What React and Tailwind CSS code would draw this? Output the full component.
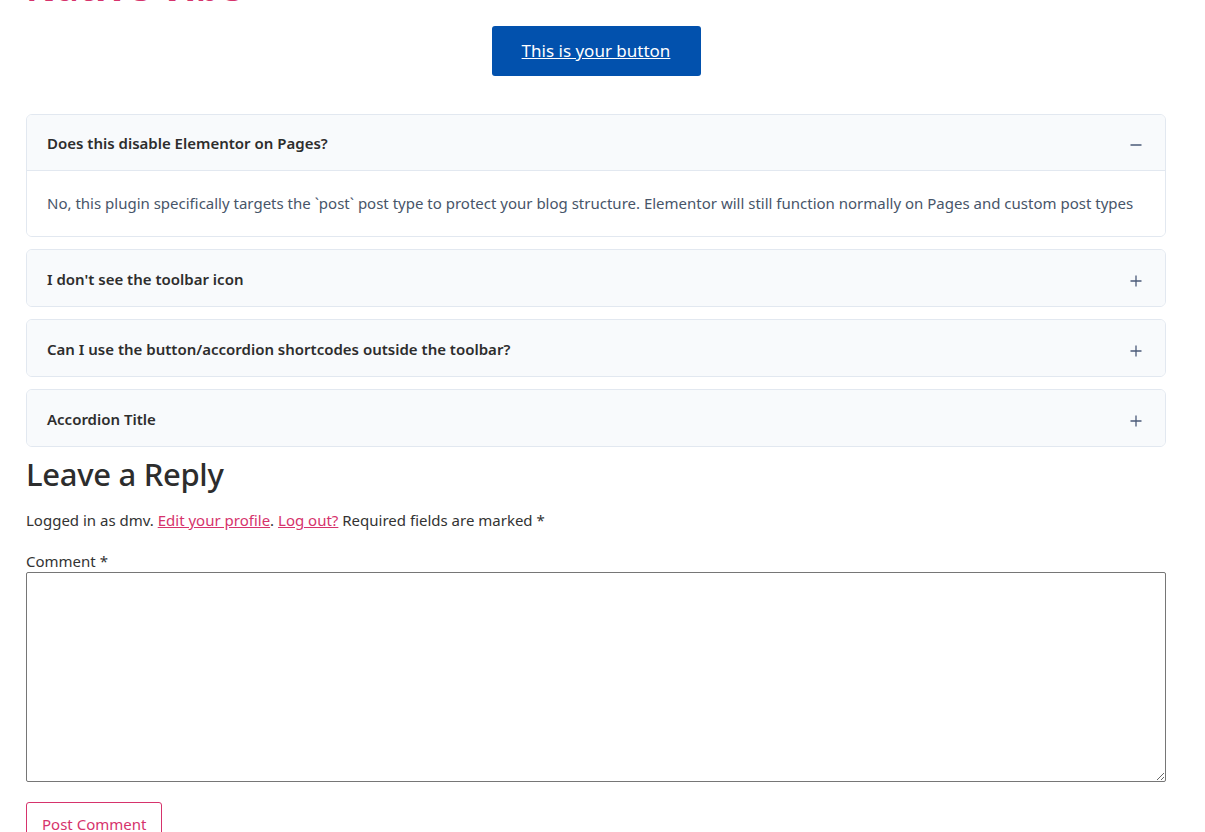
import React from "react";

const Plus = () => (
  <svg width="12" height="12" viewBox="0 0 12 12" className="shrink-0">
    <path d="M6 0.5V11.5M0.5 6H11.5" stroke="#4a5a78" strokeWidth="1.3" />
  </svg>
);
const Minus = () => (
  <svg width="12" height="12" viewBox="0 0 12 12" className="shrink-0">
    <path d="M0.5 6H11.5" stroke="#4a5a78" strokeWidth="1.3" />
  </svg>
);

const Item = ({ title, open, children }) => (
  <div className="border border-[#e2e8f0] rounded-[6px] overflow-hidden">
    <div className={`flex items-center justify-between bg-[#f8fafc] pl-[20px] pr-[23px] h-[56px] pt-[2px] ${open ? "border-b border-[#e2e8f0]" : ""}`}>
      <span className="text-[15px] font-semibold text-[#2d2d2d]">{title}</span>
      <span className="mt-[3px]">{open ? <Minus /> : <Plus />}</span>
    </div>
    {open && (
      <div className="pl-[20px] pr-[16px] pt-[20px] pb-[21px] text-[15px] text-[#475569] leading-[24px] bg-white whitespace-nowrap">
        {children}
      </div>
    )}
  </div>
);

export default function App() {
  return (
    <div className="bg-white w-[1205px] h-[832px] overflow-hidden text-[#333]" style={{ fontFamily: '"Noto Sans", "Open Sans", sans-serif' }}>
      <div className="px-[26px] w-[1192px]">
        <h1 className="text-[37px] font-bold text-[#d6336c] leading-none -mt-[32px] h-[40px] tracking-[0.3px]">Native Vibe</h1>
        <div className="flex justify-center mt-[18px]">
          <a href="#" className="bg-[#0251ad] text-white text-[17px] underline rounded-[3px] w-[209px] h-[50px] flex items-center justify-center">This is your button</a>
        </div>
        <div className="mt-[38px] flex flex-col gap-[12px]">
          <Item title="Does this disable Elementor on Pages?" open>
            No, this plugin specifically targets the `post` post type to protect your blog structure. Elementor will still function normally on Pages and custom post types
          </Item>
          <Item title="I don't see the toolbar icon" />
          <Item title="Can I use the button/accordion shortcodes outside the toolbar?" />
          <Item title="Accordion Title" />
        </div>
        <h2 className="text-[31px] font-medium text-[#2d2d2d] leading-none mt-[12px] tracking-[-0.3px]">Leave a Reply</h2>
        <p className="text-[15px] mt-[18px] leading-[24px]">
          Logged in as dmv. <a href="#" className="text-[#d6336c] underline">Edit your profile</a>. <a href="#" className="text-[#d6336c] underline">Log out?</a> Required fields are marked *
        </p>
        <label className="block text-[15px] mt-[20px] leading-[18px]">Comment *</label>
        <textarea className="block w-[1140px] h-[210px] mt-[2px] border border-[#767676] rounded-[2px] resize-y"></textarea>
        <button className="mt-[20px] border border-[#d6336c] text-[#d6336c] rounded-[3px] px-[15px] h-[44px] text-[15px] bg-white">Post Comment</button>
      </div>
    </div>
  );
}
